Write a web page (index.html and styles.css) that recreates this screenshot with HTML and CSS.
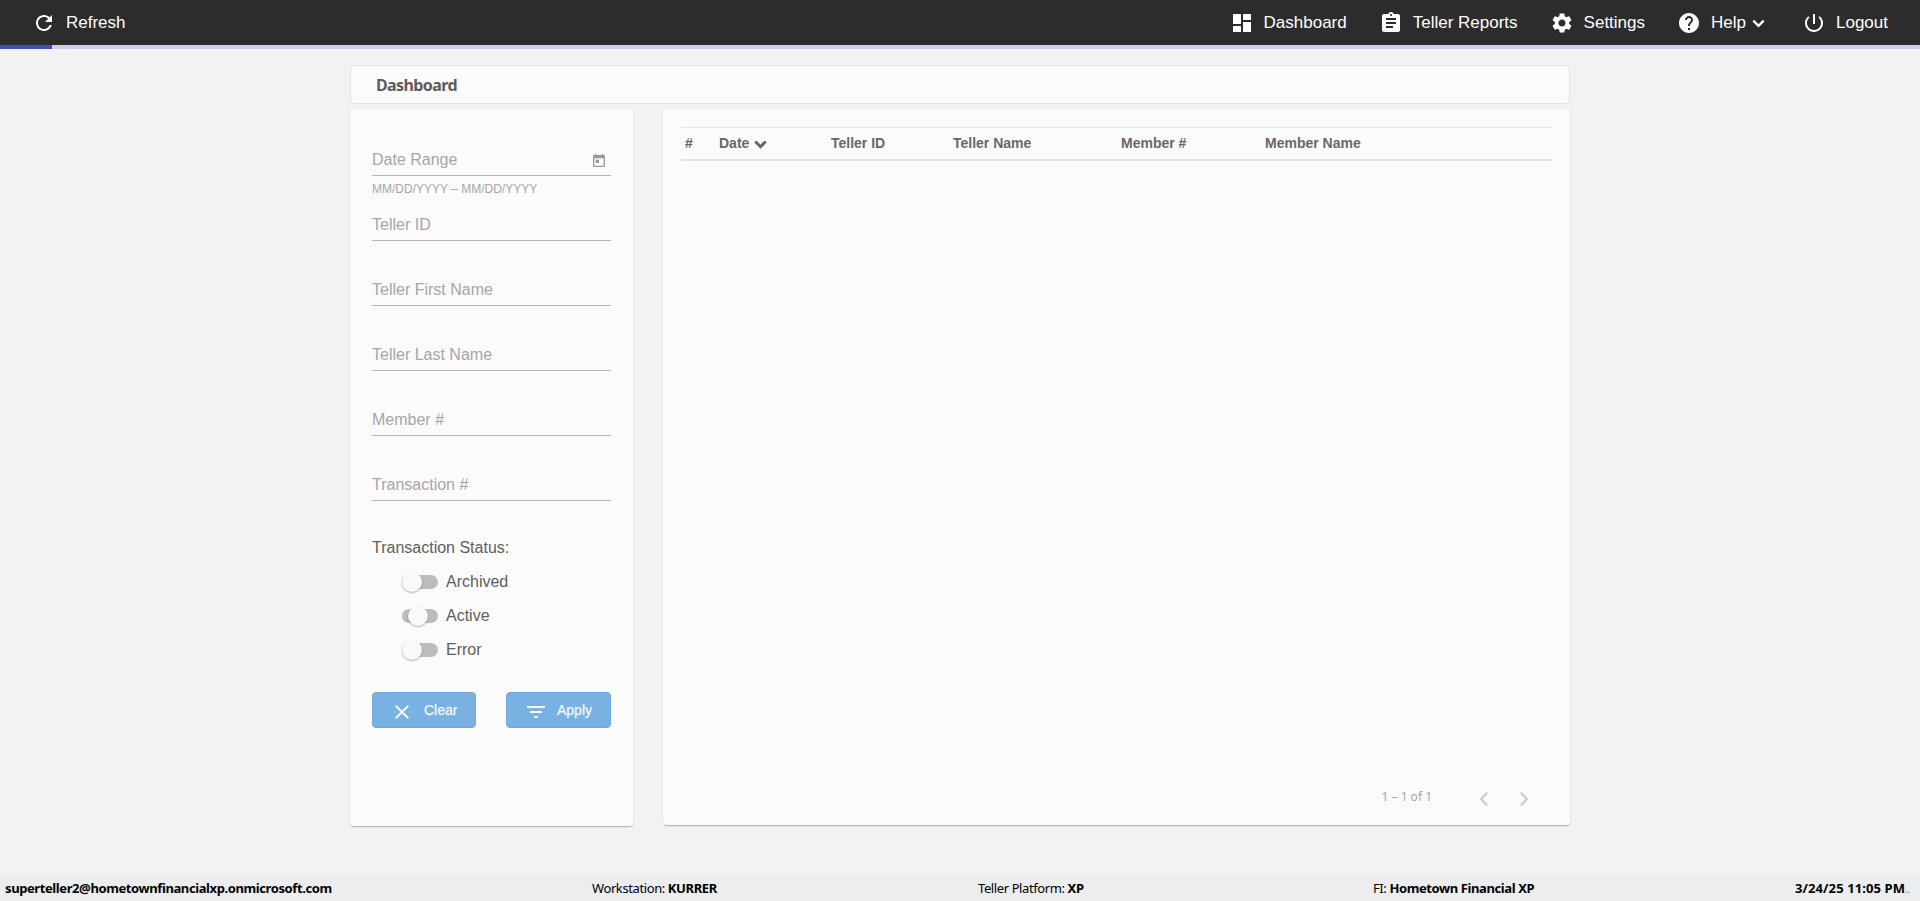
FILE: index.html
```html
<!DOCTYPE html>
<html lang="en">
<head>
<meta charset="utf-8">
<title>Dashboard</title>
<link rel="stylesheet" href="styles.css">
</head>
<body>
<header class="topbar">
  <a class="nav-item"><svg class="icon" viewBox="0 0 24 24"><path d="M17.65 6.35C16.2 4.9 14.21 4 12 4c-4.42 0-7.99 3.58-7.99 8s3.57 8 7.99 8c3.73 0 6.84-2.55 7.73-6h-2.08c-.82 2.33-3.04 4-5.65 4-3.31 0-6-2.69-6-6s2.69-6 6-6c1.66 0 3.14.69 4.22 1.78L13 11h7V4l-2.35 2.35z"/></svg>Refresh</a>
  <nav class="nav">
    <a class="nav-item"><svg class="icon" viewBox="0 0 24 24"><path d="M3 13h8V3H3v10zm0 8h8v-6H3v6zm10 0h8V11h-8v10zm0-18v6h8V3h-8z"/></svg>Dashboard</a>
    <a class="nav-item"><svg class="icon" viewBox="0 0 24 24"><path d="M19 3h-4.18C14.4 1.84 13.3 1 12 1c-1.300 0-2.400.84-2.820 2H5c-1.100 0-2 .9-2 2v14c0 1.100.9 2 2 2h14c1.100 0 2-.9 2-2V5c0-1.100-.9-2-2-2zm-7 0c.55 0 1 .45 1 1s-.45 1-1 1-1-.45-1-1 .45-1 1-1zm2 14H7v-2h7v2zm3-4H7v-2h10v2zm0-4H7V7h10v2z"/></svg>Teller Reports</a>
    <a class="nav-item"><svg class="icon" viewBox="0 0 24 24"><path d="M19.14 12.94c.04-.3.06-.61.06-.94 0-.32-.02-.64-.07-.94l2.030-1.580c.18-.14.23-.41.12-.61l-1.920-3.320c-.12-.22-.37-.29-.59-.22l-2.390.96c-.5-.38-1.030-.7-1.620-.94l-.36-2.540c-.04-.24-.24-.41-.48-.41h-3.840c-.24 0-.43.17-.47.41l-.36 2.540c-.59.24-1.130.57-1.620.94l-2.390-.96c-.22-.08-.47 0-.59.22L2.740 8.870c-.12.21-.08.47.12.61l2.030 1.580c-.05.3-.09.63-.09.94s.02.64.07.94l-2.030 1.580c-.18.14-.23.41-.12.61l1.920 3.320c.12.22.37.29.59.22l2.390-.96c.5.38 1.030.7 1.620.94l.36 2.540c.05.24.24.41.48.41h3.840c.24 0 .44-.17.47-.41l.36-2.540c.59-.24 1.130-.56 1.620-.94l2.390.96c.22.08.47 0 .59-.22l1.920-3.320c.12-.22.07-.47-.12-.61l-2.010-1.580zM12 15.6c-1.980 0-3.600-1.620-3.600-3.600s1.620-3.600 3.600-3.600 3.600 1.620 3.600 3.600-1.620 3.600-3.600 3.600z"/></svg>Settings</a>
    <a class="nav-item nav-help"><svg class="icon" viewBox="0 0 24 24"><path d="M12 2C6.480 2 2 6.480 2 12s4.480 10 10 10 10-4.480 10-10S17.520 2 12 2zm1 17h-2v-2h2v2zm2.070-7.750l-.9.92C13.450 12.900 13 13.500 13 15h-2v-.5c0-1.100.45-2.100 1.170-2.830l1.240-1.260c.37-.36.59-.86.59-1.410 0-1.100-.9-2-2-2s-2 .9-2 2H8c0-2.210 1.790-4 4-4s4 1.790 4 4c0 .88-.36 1.680-.93 2.250z"/></svg>Help<svg class="caret" viewBox="0 0 13 9"><path d="M1.300 1.600 6.500 6.800l5.200-5.200"/></svg></a>
    <a class="nav-item"><svg class="icon" viewBox="0 0 24 24"><path d="M13 3h-2v10h2V3zm4.830 2.170l-1.420 1.420C17.990 7.860 19 9.810 19 12c0 3.870-3.130 7-7 7s-7-3.130-7-7c0-2.190 1.010-4.140 2.580-5.420L6.170 5.170C4.230 6.820 3 9.260 3 12c0 4.970 4.030 9 9 9s9-4.030 9-9c0-2.740-1.230-5.180-3.170-6.830z"/></svg>Logout</a>
  </nav>
</header>
<div class="progress"><div class="progress-value"></div></div>

<main class="page">
  <h1 class="page-title"><span class="page-title-text">Dashboard</span></h1>
  <div class="columns">
    <section class="card filters">
      <div class="field"><span>Date Range</span><svg class="calendar" viewBox="0 0 24 24"><path d="M19 3h-1V1h-2v2H8V1H6v2H5c-1.110 0-1.990.9-1.990 2L3 19c0 1.100.89 2 2 2h14c1.100 0 2-.9 2-2V5c0-1.100-.9-2-2-2zm0 16H5V8h14v11zM7 10h5v5H7z"/></svg></div>
      <div class="hint">MM/DD/YYYY – MM/DD/YYYY</div>
      <div class="field field-id">Teller ID</div>
      <div class="field">Teller First Name</div>
      <div class="field">Teller Last Name</div>
      <div class="field">Member #</div>
      <div class="field">Transaction #</div>
      <div class="status-title">Transaction Status:</div>
      <div class="toggle-row"><span class="track"><span class="thumb"></span></span>Archived</div>
      <div class="toggle-row"><span class="track track-mid"><span class="thumb"></span></span>Active</div>
      <div class="toggle-row"><span class="track"><span class="thumb"></span></span>Error</div>
      <div class="buttons">
        <button class="btn btn-clear"><svg class="icon" viewBox="0 0 24 24"><path d="M19 6.410L17.590 5 12 10.590 6.410 5 5 6.410 10.590 12 5 17.590 6.410 19 12 13.410 17.590 19 19 17.590 13.410 12z"/></svg><span>Clear</span></button>
        <button class="btn btn-apply"><svg class="icon" viewBox="0 0 24 24"><path d="M10 18h4v-2h-4v2zM3 6v2h18V6H3zm3 7h12v-2H6v2z"/></svg><span>Apply</span></button>
      </div>
    </section>
    <section class="card results">
      <div class="table-head">
        <span>#</span>
        <span>Date<svg class="sort" viewBox="0 0 13 9"><path d="M1.300 1.500 6.500 6.700l5.200-5.200"/></svg></span>
        <span>Teller ID</span>
        <span>Teller Name</span>
        <span>Member #</span>
        <span>Member Name</span>
      </div>
      <div class="pager">
        <span class="pager-text">1 – 1 of 1</span>
        <svg class="pager-icon" viewBox="0 0 24 24"><path d="M15.410 7.410L14 6l-6 6 6 6 1.410-1.410L10.830 12z"/></svg>
        <svg class="pager-icon" viewBox="0 0 24 24"><path d="M10 6L8.590 7.410 13.170 12l-4.580 4.590L10 18l6-6z"/></svg>
      </div>
    </section>
  </div>
</main>

<footer class="footer">
  <span><b class="account">superteller2@hometownfinancialxp.onmicrosoft.com</b></span>
  <span>Workstation: <b>KURRER</b></span>
  <span>Teller Platform: <b>XP</b></span>
  <span>FI: <b>Hometown Financial XP</b></span>
  <span><b class="clock">3/24/25 11:05 PM</b><span class="dots">..</span></span>
</footer>
</body>
</html>
```
FILE: styles.css
```css
* { box-sizing: border-box; }
body {
  margin: 0;
  height: 901px;
  display: flex;
  flex-direction: column;
  overflow: hidden;
  background: #f2f2f2;
  font-family: "Liberation Sans", Arial, sans-serif;
}
svg { flex: none; fill: currentColor; }
.icon { width: 24px; height: 24px; }

.topbar {
  height: 45px;
  padding: 0 32px;
  display: flex;
  justify-content: space-between;
  background: #2c2c2c;
  color: #fff;
  font-size: 17px;
}
.nav { display: flex; gap: 32px; }
.nav-item { display: flex; align-items: center; gap: 10px; height: 45px; line-height: 20px; }
.topbar .icon { margin-top: 1px; }
.caret, .sort { fill: none; stroke: currentColor; stroke-width: 2.3; width: 13px; height: 9px; }
.caret { margin: 2px 5px 0 -4px; }

.progress { height: 4px; background: #cbd0e8; }
.progress-value { width: 52px; height: 4px; background: #3f51b5; }

.page { flex: 1; width: 1220px; margin: 0 auto; padding-top: 16px; }
.page-title {
  height: 39px;
  margin: 0 0 5px;
  padding: 0 25px;
  display: flex;
  align-items: center;
  border: 1px solid #e3e3e3;
  border-radius: 4px;
  background: #fbfbfb;
  color: #5c5c5c;
  font: bold 16px "Noto Sans", "Open Sans", sans-serif;
}
.page-title-text { letter-spacing: -0.6px; }

.columns { display: flex; gap: 30px; align-items: flex-start; }
.card {
  background: #fbfbfb;
  border-radius: 4px;
  box-shadow: 0 2px 1px -1px rgba(0,0,0,.14), 0 1px 1px rgba(0,0,0,.1), 0 1px 3px rgba(0,0,0,.08);
}
.filters { width: 283px; height: 717px; padding: 39px 22px 0; }
.field {
  height: 28px;
  margin-bottom: 37px;
  padding-top: 3px;
  display: flex;
  justify-content: space-between;
  border-bottom: 1px solid #b6b6b6;
  color: #a6a6a6;
  font-size: 16px;
  line-height: 18px;
}
.calendar { width: 16px; height: 16px; margin: 2px 4px 0 0; color: #999; }
.hint { height: 37px; margin-top: -37px; padding-top: 6px; color: #a6a6a6; font-size: 12px; line-height: 14px; }
.status-title { margin: 38px 0 16px; color: #606060; font-size: 16px; line-height: 18px; }
.toggle-row {
  height: 18px;
  margin-bottom: 16px;
  padding-left: 30px;
  display: flex;
  align-items: center;
  gap: 8px;
  color: #606060;
  font-size: 16px;
}
.track { width: 36px; height: 14px; display: flex; align-items: center; border-radius: 7px; background: #bcbcbc; }
.thumb { width: 20px; height: 20px; flex: none; border-radius: 50%; background: #f9f9f9; box-shadow: 0 1px 2px rgba(0,0,0,.3); }
.track-mid .thumb { margin-left: 6px; }
.buttons { display: flex; justify-content: space-between; padding-top: 17px; }
.btn {
  height: 36px;
  padding: 0 0 0 17px;
  display: flex;
  align-items: center;
  border: 1px solid #70a8da;
  border-radius: 4px;
  background: #78b1e2;
  color: #f5f8fb;
  font: 14px "Liberation Sans", Arial, sans-serif;
  -webkit-text-stroke: .25px;
}
.btn .icon { margin-top: 4px; }
.btn-clear { width: 104px; gap: 10px; }
.btn-apply { width: 105px; gap: 9px; }

.results { width: 907px; height: 716px; padding: 18px 18px 11px; display: flex; flex-direction: column; justify-content: space-between; }
.table-head {
  height: 34px;
  padding: 7px 0 0 4px;
  display: grid;
  grid-template-columns: 34px 112px 122px 168px 144px 1fr;
  border-top: 1px solid #e4e5e6;
  border-bottom: 2px solid #e0e5e9;
  color: #686868;
  font-size: 14px;
  font-weight: bold;
  line-height: 16px;
}
.sort { margin-left: 5px; vertical-align: -1px; stroke-width: 3; }
.pager { display: flex; justify-content: flex-end; align-items: center; gap: 12px; padding: 0 14px 1px 0; color: #cdcdcd; }
.pager-text { margin: -5px 26px 0 0; color: #a4a4a4; font: 12px "Noto Sans", sans-serif; letter-spacing: 0; }
.pager-icon { width: 28px; height: 28px; }

.footer {
  height: 26px;
  padding-left: 5px;
  display: grid;
  grid-template-columns: 587px 386px 395px 422px auto;
  align-items: center;
  background: #ebedef;
  color: #000;
  font: 13px "Noto Sans", "Open Sans", sans-serif;
  letter-spacing: -0.4px;
  white-space: nowrap;
}
.clock { letter-spacing: 0.1px; }
.dots { color: #7f8790; font-size: 10px; }
```
